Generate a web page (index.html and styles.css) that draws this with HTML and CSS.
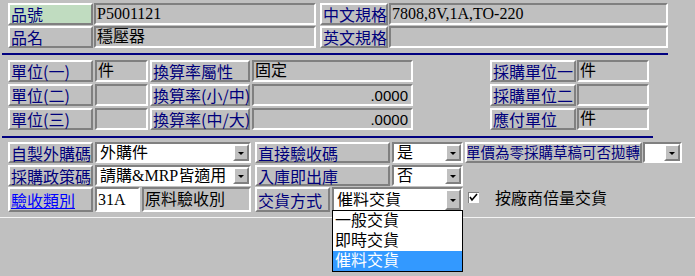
FILE: index.html
```html
<!DOCTYPE html>
<html lang="zh-Hant">
<head>
    <meta charset="UTF-8">
    <title>品號資料</title>
    <link rel="stylesheet" href="styles.css">
</head>
<body>
    <div class="form">
        <div class="sec top">
            <div class="row r1">
                <span class="lbl green w85">品號</span>
                <span class="fld w222 g1">P5001121</span>
                <span class="lbl w68 g4">中文規格</span>
                <span class="fld w279 g1">7808,8V,1A,TO-220</span>
            </div>
            <div class="row r2">
                <span class="lbl w85">品名</span>
                <span class="fld w222 g1">穩壓器</span>
                <span class="lbl w68 g4">英文規格</span>
                <span class="fld w279 g1"></span>
            </div>
        </div>
        <div class="rule first"></div>

        <div class="sec units">
            <div class="row">
                <span class="lbl w85">單位(一)</span>
                <span class="fld w53 g2">件</span>
                <span class="lbl w100 g2">換算率屬性</span>
                <span class="fld w161 g2">固定</span>
                <span class="lbl w86 g77">採購單位一</span>
                <span class="fld w72 g1">件</span>
            </div>
            <div class="row">
                <span class="lbl w85">單位(二)</span>
                <span class="fld w53 g2"></span>
                <span class="lbl w100 g2">換算率(小/中)</span>
                <span class="fld w161 g2 num">.0000</span>
                <span class="lbl w86 g77">採購單位二</span>
                <span class="fld w72 g1"></span>
            </div>
            <div class="row">
                <span class="lbl w85">單位(三)</span>
                <span class="fld w53 g2"></span>
                <span class="lbl w100 g2">換算率(中/大)</span>
                <span class="fld w161 g2 num">.0000</span>
                <span class="lbl w86 g77">應付單位</span>
                <span class="fld w72 g1">件</span>
            </div>
        </div>
        <div class="rule second"></div>

        <div class="sec buy">
            <div class="row r6">
                <span class="lbl w85">自製外購碼</span>
                <span class="combo w156 g2"><span class="val">外購件</span><span class="btn"></span></span>
                <span class="lbl w135 g4">直接驗收碼</span>
                <span class="combo w71 g2"><span class="val">是</span><span class="btn"></span></span>
                <span class="lbl w177 g2 clip"><span>單價為零採購草稿可否拋轉</span></span>
                <span class="combo w39 g1"><span class="val"></span><span class="btn"></span></span>
            </div>
            <div class="row r7">
                <span class="lbl w85">採購政策碼</span>
                <span class="combo w156 g2"><span class="val">請購&amp;MRP皆適用</span><span class="btn"></span></span>
                <span class="lbl w135 g4">入庫即出庫</span>
                <span class="combo w71 g2"><span class="val">否</span><span class="btn"></span></span>
            </div>
            <div class="row r8">
                <span class="lbl link w85">驗收類別</span>
                <span class="fld white w45 g2">31A</span>
                <span class="fld w109 g2">原料驗收別</span>
                <span class="lbl w75 g4">交貨方式</span>
                <span class="combo w131 g2 open">
                    <span class="val">催料交貨</span><span class="btn"></span>
                    <span class="list">
                        <span class="item">一般交貨</span>
                        <span class="item">即時交貨</span>
                        <span class="item sel">催料交貨</span>
                    </span>
                </span>
                <span class="check">
                    <svg width="11" height="11" viewBox="0 0 11 11"><path d="M2 5 L4 8 L9 2" fill="none" stroke="#000" stroke-width="1.6"/></svg>
                </span>
                <span class="check-text">按廠商倍量交貨</span>
            </div>
        </div>
        <div class="rule bottom"></div>
    </div>
</body>
</html>
```

FILE: styles.css
```css
html, body {
    margin: 0;
    background: #c0c0c0;
}
body {
    width: 695px;
    height: 276px;
    overflow: hidden;
    font-family: "Noto Sans CJK TC", "Liberation Sans", sans-serif;
    font-size: 16px;
}
.form {
    padding-left: 8px;
}
.row {
    display: flex;
    align-items: stretch;
    height: 22px;
}
.sec.top {
    padding-top: 3px;
}
.sec.top .r2 {
    margin-top: 1px;
}
.rule {
    margin-left: -6px;
    height: 0;
}
.rule.first {
    width: 666px;
    margin-top: 5px;
    border-top: 2px solid #000080;
}
.rule.second {
    width: 651px;
    margin-top: 6px;
    border-top: 2px solid #000080;
}
.rule.bottom {
    margin-left: -8px;
    width: 695px;
    margin-top: 5px;
    border-top: 1px solid #f4f4f4;
}
.sec.units {
    padding-top: 5px;
}
.sec.units .row + .row {
    margin-top: 2px;
}
.sec.buy {
    padding-top: 4px;
}
.sec.buy .r6 { height: 21px; }
.sec.buy .r7 { height: 21px; margin-top: 2px; }
.sec.buy .r8 { height: 25px; margin-top: 1px; }

.lbl, .fld, .combo {
    box-sizing: border-box;
    display: flex;
    align-items: center;
    white-space: nowrap;
    line-height: 1;
}
.lbl {
    border: 2px solid;
    border-color: #ffffff #808080 #808080 #ffffff;
    color: #00007b;
    padding-left: 1px;
    background: #c0c0c0;
}
.lbl.green {
    background: #c0dcc0;
}
.lbl.link {
    color: #0000ff;
    text-decoration: underline;
}
.lbl.clip {
    overflow: hidden;
    justify-content: flex-end;
    font-size: 14.5px;
    padding: 0;
}
.fld {
    border: 2px solid;
    border-color: #808080 #ffffff #ffffff #808080;
    background: #c0c0c0;
    color: #000;
    padding-left: 1px;
    font-family: "Liberation Serif", "Noto Sans CJK TC", serif;
}
.fld.white {
    background: #fff;
}
.fld.num {
    justify-content: flex-end;
    padding-right: 3px;
    font-family: "Liberation Sans", sans-serif;
    font-size: 15px;
}
.combo {
    position: relative;
    border: 2px solid;
    border-color: #808080 #ffffff #ffffff #808080;
    background: #fff;
    font-family: "Liberation Serif", "Noto Sans CJK TC", serif;
}
.combo .val {
    flex: 1;
    padding-left: 3px;
    overflow: hidden;
}
.combo .btn {
    box-sizing: border-box;
    width: 16px;
    align-self: stretch;
    border: 2px solid;
    border-color: #ffffff #808080 #808080 #ffffff;
    background: #c0c0c0;
    position: relative;
}
.combo .btn::after {
    content: "";
    position: absolute;
    left: 3px;
    top: 50%;
    margin-top: -1px;
    border-left: 3px solid transparent;
    border-right: 3px solid transparent;
    border-top: 3px solid #000;
}
.combo .list {
    position: absolute;
    left: -2px;
    top: 21px;
    width: 131px;
    box-sizing: border-box;
    border: 1px solid #000;
    background: #fff;
    display: flex;
    flex-direction: column;
    z-index: 5;
}
.combo .item {
    height: 20px;
    line-height: 20px;
    padding-left: 2px;
    color: #000;
}
.combo .item.sel {
    background: #3399ff;
    color: #fff;
}
.check {
    box-sizing: border-box;
    width: 11px;
    height: 11px;
    margin: 5px 0 0 5px;
    background: #fff;
    border-top: 1px solid #808080;
    border-left: 1px solid #808080;
    display: flex;
}
.check svg {
    margin: -1px 0 0 -1px;
}
.check-text {
    margin-left: 16px;
    line-height: 20px;
    color: #000;
}

.w39 { width: 39px; }
.w45 { width: 45px; }
.w53 { width: 53px; }
.w68 { width: 68px; }
.w71 { width: 71px; }
.w72 { width: 72px; }
.w75 { width: 75px; }
.w85 { width: 85px; }
.w86 { width: 86px; }
.w100 { width: 100px; }
.w109 { width: 109px; }
.w131 { width: 131px; }
.w135 { width: 135px; }
.w156 { width: 156px; }
.w161 { width: 161px; }
.w177 { width: 177px; }
.w222 { width: 222px; }
.w279 { width: 279px; }
.g1 { margin-left: 1px; }
.g2 { margin-left: 2px; }
.g4 { margin-left: 4px; }
.g77 { margin-left: 77px; }
```
